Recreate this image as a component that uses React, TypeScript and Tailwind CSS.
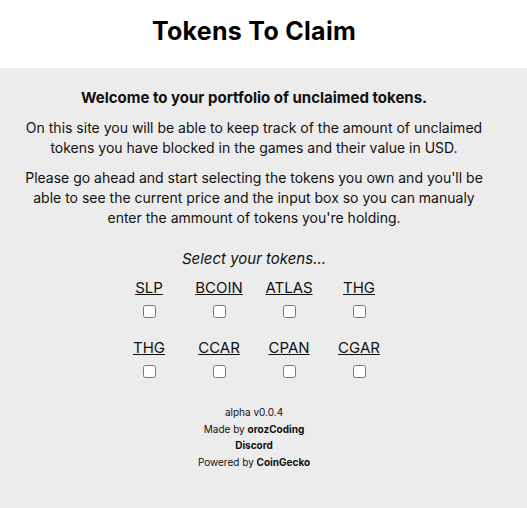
const TOKENS = ["SLP", "BCOIN", "ATLAS", "THG", "THG", "CCAR", "CPAN", "CGAR"];

export default function App() {
  return (
    <div className="min-h-[508px] flex flex-col bg-[#ececec] text-[#111]" style={{ fontFamily: "Inter, 'Noto Sans', sans-serif" }}>
      <header className="bg-white h-[68px] flex items-center justify-center pr-[19px] pb-[4px]">
        <h1 className="text-[25px] font-bold tracking-[0.3px] text-black">Tokens To Claim</h1>
      </header>
      <main className="flex-1 flex flex-col items-center pt-[16px] text-center pr-[19px]">
        <h2 className="text-[15px] font-bold leading-[28px]">Welcome to your portfolio of unclaimed tokens.</h2>
        <p className="mt-[6px] text-[14px] leading-[20px] whitespace-nowrap">
          On this site you will be able to keep track of the amount of unclaimed
          <br />
          tokens you have blocked in the games and their value in USD.
        </p>
        <p className="mt-[10px] text-[14px] leading-[20px] whitespace-nowrap">
          Please go ahead and start selecting the tokens you own and you'll be
          <br />
          able to see the current price and the input box so you can manualy
          <br />
          enter the ammount of tokens you're holding.
        </p>
        <p className="mt-[20px] text-[15px] italic leading-[22px]">Select your tokens...</p>
        <div className="grid grid-cols-4 w-[280px] mt-[6px]">
          {TOKENS.map((t, i) => (
            <div key={i} className="flex flex-col items-center h-[60px] pt-[2px]">
              <span className="text-[15px] underline leading-[20px]">{t}</span>
              <input type="checkbox" className="mt-[7px] w-[13px] h-[13px]" />
            </div>
          ))}
        </div>
        <footer className="mt-[8px] text-[10px] leading-[16.7px]">
          <div>alpha v0.0.4</div>
          <div>Made by <b>orozCoding</b></div>
          <div className="font-bold">Discord</div>
          <div>Powered by <b>CoinGecko</b></div>
        </footer>
      </main>
    </div>
  );
}
